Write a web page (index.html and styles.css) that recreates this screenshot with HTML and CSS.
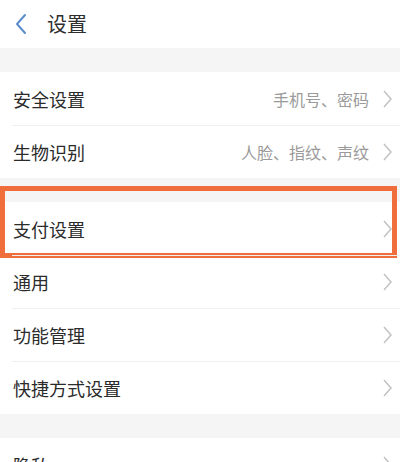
FILE: index.html
```html
<!DOCTYPE html>
<html lang="zh-CN">
<head>
    <meta charset="UTF-8">
    <meta name="viewport" content="width=device-width, initial-scale=1.0">
    <title>设置</title>
    <link rel="stylesheet" href="styles.css">
</head>
<body>
    <div class="header">
        <svg class="back" width="14" height="22" viewBox="0 0 14 22">
            <polyline points="11,2 3,11 11,20" fill="none" stroke="#5b8dcc" stroke-width="2" stroke-linecap="round" stroke-linejoin="round"/>
        </svg>
        <div class="title">设置</div>
    </div>

    <div class="gap"></div>

    <div class="group">
        <div class="row">
            <div class="label">安全设置</div>
            <div class="value">手机号、密码</div>
            <svg class="arrow" width="9" height="18" viewBox="0 0 9 18"><polyline points="1,1 8,9 1,17"/></svg>
        </div>
        <div class="row">
            <div class="label">生物识别</div>
            <div class="value">人脸、指纹、声纹</div>
            <svg class="arrow" width="9" height="18" viewBox="0 0 9 18"><polyline points="1,1 8,9 1,17"/></svg>
        </div>
    </div>

    <div class="gap"></div>

    <div class="group">
        <div class="row">
            <div class="label">支付设置</div>
            <svg class="arrow" width="9" height="18" viewBox="0 0 9 18"><polyline points="1,1 8,9 1,17"/></svg>
            <div class="mark"></div>
        </div>
        <div class="row">
            <div class="label">通用</div>
            <svg class="arrow" width="9" height="18" viewBox="0 0 9 18"><polyline points="1,1 8,9 1,17"/></svg>
        </div>
        <div class="row">
            <div class="label">功能管理</div>
            <svg class="arrow" width="9" height="18" viewBox="0 0 9 18"><polyline points="1,1 8,9 1,17"/></svg>
        </div>
        <div class="row">
            <div class="label">快捷方式设置</div>
            <svg class="arrow" width="9" height="18" viewBox="0 0 9 18"><polyline points="1,1 8,9 1,17"/></svg>
        </div>
    </div>

    <div class="gap"></div>

    <div class="group">
        <div class="row">
            <div class="label">隐私</div>
            <svg class="arrow" width="9" height="18" viewBox="0 0 9 18"><polyline points="1,1 8,9 1,17"/></svg>
        </div>
    </div>
</body>
</html>
```

FILE: styles.css
```css
body {
    margin: 0;
    background-color: #ffffff;
    font-family: "Noto Sans CJK SC", "Noto Sans", sans-serif;
    color: #333333;
    overflow: hidden;
}

.header {
    height: 48px;
    display: flex;
    align-items: center;
    padding-left: 14px;
}

.back {
    display: block;
    margin-right: 19px;
}

.title {
    font-size: 20px;
    line-height: 1;
    color: #2e2e2e;
}

.gap {
    height: 24px;
    background-color: #f5f5f5;
}

.row {
    position: relative;
    height: 53px;
    display: flex;
    align-items: center;
    padding: 0 8px 0 13px;
}

.row + .row::before {
    content: "";
    position: absolute;
    top: 0;
    left: 12px;
    right: 0;
    border-top: 1px solid #f0f0f0;
}

.label {
    flex: 1;
    font-size: 18px;
    color: #2b2b2b;
}

.value {
    font-size: 16px;
    color: #9a9a9a;
    margin-right: 14px;
}

.arrow {
    display: block;
    fill: none;
    stroke: #c2c2c2;
    stroke-width: 1.5;
}

.mark {
    position: absolute;
    top: -16px;
    bottom: -3px;
    left: 0;
    right: 3px;
    border: 5px solid #f06e3c;
}
```
